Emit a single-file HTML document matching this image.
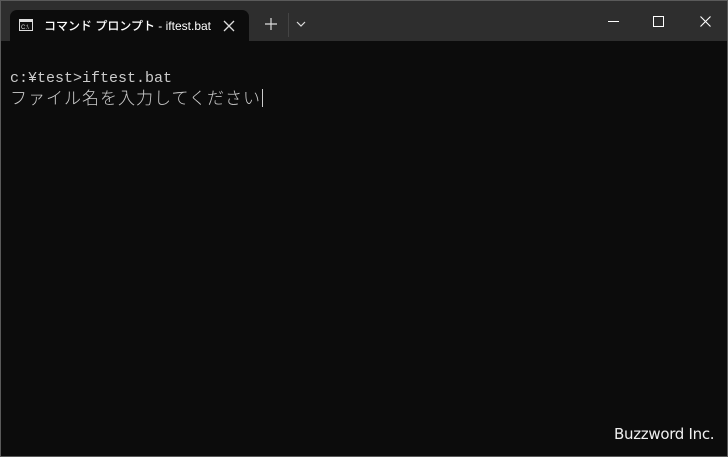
<html><head><style>
body{margin:0;width:728px;height:457px;background:#0c0c0c;overflow:hidden;position:relative;font-family:"Liberation Sans","Noto Sans CJK JP",sans-serif}
.frame{position:absolute;left:0;top:0;width:726px;height:455px;border:1px solid #5a5a5a;background:#0c0c0c}
.bar{position:absolute;left:0;top:0;width:726px;height:40px;background:#2e2e2e}
.tab{position:absolute;left:9px;top:9px;width:239px;height:31px;background:#0c0c0c;border-radius:7px 7px 0 0}
.ttl{position:absolute;left:34px;top:7px;color:#fff;font-size:12px;font-weight:500;font-family:"Liberation Sans","Noto Sans CJK JP",sans-serif}
.term{position:absolute;left:9px;top:68px;color:#cccccc;font-family:"Liberation Mono","Noto Sans CJK JP",monospace;font-size:15px;line-height:20px;white-space:pre}
.jp{font-size:17px;letter-spacing:1px;font-weight:300;font-family:"Noto Sans CJK JP",sans-serif;position:relative;top:-2px}
.wm{position:absolute;left:614px;top:425px;color:#f0f0f0;font-size:15px;font-family:"DejaVu Sans","Liberation Sans",sans-serif;letter-spacing:-0.3px}
</style></head><body>
<div class="frame">
<div class="bar"></div>
<div class="tab">
<svg style="position:absolute;left:9px;top:9px" width="14" height="12"><rect x="0.5" y="0.5" width="13" height="11" fill="none" stroke="#ddd"/><rect x="1" y="1" width="12" height="2" fill="#ddd"/><text x="2" y="10" font-size="6" fill="#ddd" font-family="Liberation Sans">C:\_</text></svg>
<div class="ttl">コマンド プロンプト - iftest.bat</div>
<svg style="position:absolute;left:213px;top:10px" width="12" height="12"><path d="M1 1L11 11M11 1L1 11" stroke="#ddd" stroke-width="1.3"/></svg>
</div>
<svg style="position:absolute;left:264px;top:17px" width="12" height="12"><path d="M6 0V12M0 6H12" stroke="#ddd" stroke-width="1.2"/></svg>
<div style="position:absolute;left:287px;top:12px;width:1px;height:24px;background:#444"></div>
<svg style="position:absolute;left:295px;top:20px" width="10" height="6"><path d="M1 1L5 5L9 1" fill="none" stroke="#ddd" stroke-width="1.2"/></svg>
<div style="position:absolute;left:607px;top:20px;width:11px;height:1px;background:#fff"></div>
<div style="position:absolute;left:652px;top:15px;width:9px;height:9px;border:1px solid #fff"></div>
<svg style="position:absolute;left:699px;top:15px" width="11" height="11"><path d="M0.5 0.5L10.5 10.5M10.5 0.5L0.5 10.5" stroke="#fff" stroke-width="1.1"/></svg>
<div class="term">c:¥test&gt;iftest.bat
<span class="jp">ファイル名を入力してください</span></div>
<div style="position:absolute;left:261px;top:88px;width:1px;height:18px;background:#ccc"></div>
</div>
<div class="wm">Buzzword Inc.</div>
</body></html>
